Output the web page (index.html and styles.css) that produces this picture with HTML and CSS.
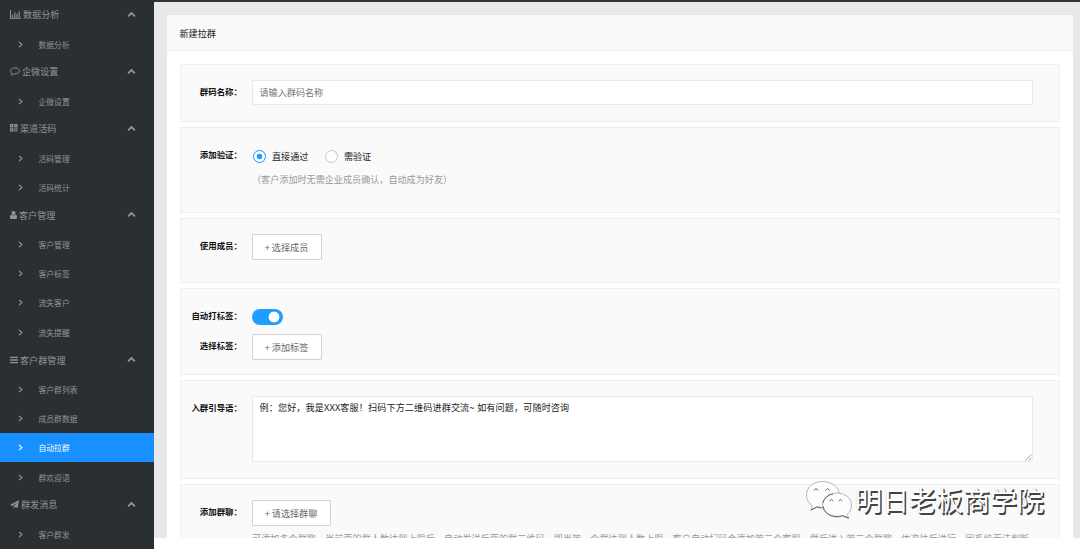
FILE: index.html
```html
<!DOCTYPE html>
<html lang="zh-CN">
<head>
<meta charset="utf-8">
<title>新建拉群</title>
<link rel="stylesheet" href="styles.css">
</head>
<body>
<svg class="defs" width="0" height="0">
  <symbol id="up" viewBox="0 0 10 7"><path d="M1.2 5.7 5 1.9 8.8 5.7" fill="none" stroke="currentColor" stroke-width="2"/></symbol>
  <symbol id="right" viewBox="0 0 5 7"><path d="M1 .8 3.9 3.5 1 6.2" fill="none" stroke="currentColor" stroke-width="1.1"/></symbol>
</svg>
<div class="app">
  <nav class="sidebar">
    <div class="group"><svg class="icon" width="11" height="9" viewBox="0 0 11 9"><path d="M.5 0v8.3H11M2.6 7.4V4.7M4.8 7.4V2.3M7 7.4V3.7M9.2 7.4V1.3" fill="none" stroke="currentColor" stroke-width="1.1"/></svg><span>数据分析</span><svg class="up"><use href="#up"/></svg></div>
    <div class="item"><svg class="right"><use href="#right"/></svg>数据分析</div>
    <div class="group"><svg class="icon" width="10" height="9" viewBox="0 0 10 9"><path d="M5 .9C2.500.9.6 2.100.6 4c0 1 .6 1.900 1.500 2.400-.1.700-.5 1.200-1 1.600 1.200-.1 2-.5 2.700-1.100 3.200.4 5.600-1 5.600-2.900C9.400 2.100 7.500.9 5 .9Z" fill="none" stroke="currentColor" stroke-width=".9"/></svg><span>企微设置</span><svg class="up"><use href="#up"/></svg></div>
    <div class="item"><svg class="right"><use href="#right"/></svg>企微设置</div>
    <div class="group"><svg class="icon" width="8" height="8" viewBox="0 0 8 8"><path d="M0 0h3.400v3.400H0zM4.200 0h3.400v3.400H4.200zM0 4.200h3.400v3.400H0zM4.200 4.200h1.500v1.500H4.200zM6.200 4.200h1.400v1.500H6.200zM4.200 6.200h1.500v1.400H4.200zM6.200 6.200h1.400v1.400H6.200z" fill="currentColor"/><path d="M1.200 1.200h1v1h-1zM5.400 1.200h1v1h-1zM1.200 5.400h1v1h-1z" fill="#2a2f31"/></svg><span>渠道活码</span><svg class="up"><use href="#up"/></svg></div>
    <div class="item"><svg class="right"><use href="#right"/></svg>活码管理</div>
    <div class="item"><svg class="right"><use href="#right"/></svg>活码统计</div>
    <div class="group"><svg class="icon" width="7" height="8" viewBox="0 0 7 8"><circle cx="3.500" cy="2.100" r="2" fill="currentColor"/><path d="M1.600 3.600C.6 3.700 0 4.800 0 6.400 0 7.400.5 8 1.300 8h4.400C6.500 8 7 7.400 7 6.400 7 4.800 6.400 3.700 5.400 3.600a2.700 2.700 0 0 1-3.800 0Z" fill="currentColor"/></svg><span>客户管理</span><svg class="up"><use href="#up"/></svg></div>
    <div class="item"><svg class="right"><use href="#right"/></svg>客户管理</div>
    <div class="item"><svg class="right"><use href="#right"/></svg>客户标签</div>
    <div class="item"><svg class="right"><use href="#right"/></svg>流失客户</div>
    <div class="item"><svg class="right"><use href="#right"/></svg>流失提醒</div>
    <div class="group"><svg class="icon" width="8" height="8" viewBox="0 0 8 8"><path d="M0 1.300h8M0 4h8M0 6.700h8" stroke="currentColor" stroke-width="1.300"/></svg><span>客户群管理</span><svg class="up"><use href="#up"/></svg></div>
    <div class="item"><svg class="right"><use href="#right"/></svg>客户群列表</div>
    <div class="item"><svg class="right"><use href="#right"/></svg>成员群数据</div>
    <div class="item active"><svg class="right"><use href="#right"/></svg>自动拉群</div>
    <div class="item"><svg class="right"><use href="#right"/></svg>群欢迎语</div>
    <div class="group"><svg class="icon" width="9" height="9" viewBox="0 0 9 9"><path d="M9 0 7.700 8 5.200 7 3.800 8.800V6.500L7.500 2 2.700 6 0 5Z" fill="currentColor"/></svg><span>群发消息</span><svg class="up"><use href="#up"/></svg></div>
    <div class="item"><svg class="right"><use href="#right"/></svg>客户群发</div>
  </nav>
  <main class="page">
    <div class="card">
      <h1 class="title">新建拉群</h1>
      <form class="form">
        <section class="panel panel-name">
          <label class="label">群码名称：</label>
          <input class="input" placeholder="请输入群码名称">
        </section>
        <section class="panel panel-verify">
          <label class="label">添加验证：</label>
          <div>
            <div class="radios">
              <span class="radio checked"></span><span class="radio-text">直接通过</span>
              <span class="radio"></span><span class="radio-text">需验证</span>
            </div>
            <p class="note">（客户添加时无需企业成员确认，自动成为好友）</p>
          </div>
        </section>
        <section class="panel panel-member">
          <label class="label">使用成员：</label>
          <button type="button" class="button">+ 选择成员</button>
        </section>
        <section class="panel panel-tags">
          <label class="label">自动打标签：</label>
          <span class="switch"></span>
          <label class="label">选择标签：</label>
          <button type="button" class="button">+ 添加标签</button>
        </section>
        <section class="panel panel-guide">
          <label class="label">入群引导语：</label>
          <div class="textarea-wrap">
            <textarea class="textarea">例：您好，我是XXX客服！扫码下方二维码进群交流~ 如有问题，可随时咨询</textarea>
            <svg class="grip" width="7" height="7" viewBox="0 0 7 7"><path d="M.5 6.500 6.500.5M3.800 6.500 6.500 3.800" stroke="#888" stroke-width=".8"/></svg>
          </div>
        </section>
        <section class="panel panel-groups">
          <label class="label">添加群聊：</label>
          <div>
            <button type="button" class="button wide">+ 请选择群聊</button>
            <p class="help">可添加多个群聊，当前面的群人数达到上限后，自动发送后面的群二维码，即当第一个群达到人数上限，客户自动扫码会添加第二个客服，然后进入第二个群聊，依次往后进行，因系统无法判断</p>
          </div>
        </section>
      </form>
    </div>
  </main>
</div>
<div class="watermark">
  <svg width="48" height="40" viewBox="0 0 48 40">
    <g fill="#fdfdfd" stroke="#999" stroke-width=".7">
      <path d="M17.500 1.500C8 1.500 1.500 7.500 1.500 15c0 4.500 2.300 8.300 6 10.800L5.800 30.500l6-3.200c1.800.6 3.700.9 5.700.9 9.500 0 17-6 17-13.300S27 1.500 17.500 1.500Z"/>
      <path d="M32 13c-8 0-14.500 5.300-14.500 12S24 37 32 37c2 0 3.900-.3 5.600-.9l6.100 2.400-1.500-4.200C45 32 46.500 28.800 46.500 25c0-6.700-6.500-12-14.500-12Z"/>
    </g>
    <path d="M18 26c.8 6 6.500 10.500 14 10.500 2 0 3.900-.3 5.600-.9l6.100 2.400M6 30l6-3.200 4.500.8M18 23c1-5 5-8 10-9" fill="none" stroke="#555" stroke-width=".9"/>
    <path d="M9 10.500q2-3.500 4 0M20.500 10.500q2-3.500 4 0M24.500 21q2-3 3.800 0M33.500 21q2-3 3.800 0" fill="none" stroke="#555" stroke-width=".9"/>
  </svg>
  <span>明日老板商学院</span>
</div>
</body>
</html>
```
FILE: styles.css
```css
* { box-sizing: border-box; }
body {
  margin: 0;
  height: 549px;
  overflow: hidden;
  position: relative;
  background: #fff;
  font-family: "Noto Sans CJK SC", sans-serif;
  font-size: 9.1px;
  color: #222;
}
.defs { display: block; }
.app { display: flex; height: 549px; }

.sidebar {
  width: 153.5px;
  flex: none;
  padding-top: 1.3px;
  overflow: hidden;
  background: #2a2f31;
  color: #919596;
}
.group {
  display: flex;
  align-items: center;
  height: 27.7px;
  padding: 0 18px 1.3px 9.5px;
}
.group .icon { flex: none; margin-right: 2.500px; }
.up { width: 9px; height: 7px; margin-left: auto; }
.item {
  display: flex;
  align-items: center;
  height: 29.3px;
  padding: 1px 0 0 17.5px;
  font-size: 7.8px;
}
.right { width: 5px; height: 7px; margin-right: 16px; }
.active { background: #1890ff; color: #fff; }

.page {
  flex: 1;
  min-width: 0;
  height: 538px;
  overflow: hidden;
  padding: 13px 7px 0 13px;
  border-top: 2px solid #303437;
  background: #e8e8e8;
}
.card { height: 540px; background: #fff; }
.title {
  height: 36px;
  margin: 0;
  padding-left: 13px;
  border-bottom: 1px solid #f0f0f0;
  background: #f9f9f9;
  font-size: 9.1px;
  font-weight: 400;
  line-height: 36px;
  color: #111;
}
.form { display: grid; row-gap: 5px; padding: 13px 13px 0; }
.panel {
  display: grid;
  grid-template-columns: 61.5px 1fr;
  column-gap: 10px;
  align-content: start;
  justify-items: start;
  padding: 15px 26px 0 0;
  border: 1px solid #eee;
  background: #fafafa;
}
.panel-name { height: 58px; }
.panel-verify { height: 86px; padding-top: 15px; }
.panel-member { height: 65px; }
.panel-tags { height: 87px; row-gap: 8px; }
.panel-guide { height: 99px; }
.panel-groups { height: 90px; }
.label {
  justify-self: end;
  font-size: 8.45px;
  font-weight: 700;
  line-height: 22px;
  white-space: nowrap;
  color: #111;
}
.input, .textarea {
  display: block;
  width: 100%;
  border: 1px solid #e9e9e9;
  border-radius: 1px;
  outline: 0;
  background: #fff;
  font: inherit;
}
.input { height: 25px; padding: 0 6.5px 1px; }
.input::placeholder { color: #757575; }
.textarea-wrap { position: relative; width: 100%; }
.textarea {
  height: 66px;
  padding: 4px 6.5px;
  font-family: "Noto Sans", "Noto Sans CJK SC", sans-serif;
  line-height: 13px;
  letter-spacing: .12px;
  color: #222;
  resize: none;
}
.grip { position: absolute; right: 1px; bottom: 1px; }
.radios { display: flex; align-items: center; height: 26px; padding-left: 1px; }
.radio {
  width: 13px;
  height: 13px;
  border: 1px solid #c5c5c5;
  border-radius: 50%;
  background: #fff;
}
.radio.checked {
  border-color: #1890ff;
  background: radial-gradient(circle, #1e9fff 2.5px, #fff 3.2px);
}
.radio-text { margin: 0 16.5px 0 6px; }
.note { margin: 0; line-height: 21px; color: #999; }
.button {
  display: block;
  width: 70px;
  height: 26px;
  padding: 0 1px 0 0;
  border: 1px solid #d2d2d2;
  border-radius: 1px;
  background: #fff;
  font: inherit;
  color: #666;
}
.button.wide { width: 79px; }
.switch {
  width: 31px;
  height: 16px;
  margin-top: 5px;
  border-radius: 8px;
  background: radial-gradient(circle at 22px 8px, #fff 5px, #1e9fff 5.8px);
}
.help { margin: 4px 0 0; line-height: 16px; letter-spacing: .05px; white-space: nowrap; color: #999; }

.watermark {
  position: absolute;
  left: 805px;
  top: 479.5px;
  display: flex;
  align-items: center;
  gap: 2px;
  font-size: 27px;
  line-height: 40px;
  color: #fff;
  text-shadow: 1px 1px 0 #444, 1.5px 1.5px 0 #444, -.5px -.5px 0 #ddd;
}
```
